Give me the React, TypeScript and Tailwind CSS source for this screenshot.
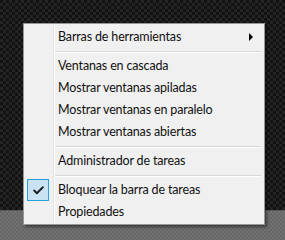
import { Check } from "lucide-react";

type Item = { label: string; sub?: boolean; checked?: boolean } | "sep";

const items: Item[] = [
  { label: "Barras de herramientas", sub: true },
  "sep",
  { label: "Ventanas en cascada" },
  { label: "Mostrar ventanas apiladas" },
  { label: "Mostrar ventanas en paralelo" },
  { label: "Mostrar ventanas abiertas" },
  "sep",
  { label: "Administrador de tareas" },
  "sep",
  { label: "Bloquear la barra de tareas", checked: true },
  { label: "Propiedades" },
];

export default function App() {
  return (
    <div className="relative w-[285px] h-[240px] overflow-hidden flex flex-col font-['Lato',sans-serif]">
      {/* desktop */}
      <div className="flex-1 bg-[#161616] bg-[repeating-conic-gradient(#242424_0_25%,#121212_0_50%)] bg-size-[6px_6px]" />
      {/* taskbar */}
      <div className="h-[30px] bg-[#6b6b6b] bg-[repeating-conic-gradient(#727272_0_25%,#666666_0_50%)] bg-size-[4px_4px] border-t border-[#5a5a5a]" />

      {/* context menu */}
      <div className="absolute left-[23px] top-[23px] w-[242px] h-[202px] bg-[#f0f0f0] border border-[#979797] shadow-[2px_2px_3px_rgba(0,0,0,0.45)] p-[2px]">
        <div className="relative flex flex-col">
          <div className="absolute left-[27px] top-0 bottom-0 w-px bg-[#e2e3e3] border-r border-white box-content" />
          {items.map((it, i) =>
            it === "sep" ? (
              <div key={i} className="h-[7px] flex items-center pl-[29px] pr-[1px]">
                <div className="h-px w-full bg-[#d7d7d7] border-b border-white box-content" />
              </div>
            ) : (
              <div key={i} className="relative h-[22px] flex items-center text-[12.5px] tracking-[-0.15px] text-[#111]">
                <div className="w-[29px] h-[22px] flex items-center">
                  {it.checked && (
                    <div className="w-[22px] h-[22px] ml-px border border-[#26a0da] bg-[#c9e3f5] flex items-center justify-center">
                      <Check className="w-[13px] h-[13px] text-[#1e1e1e]" strokeWidth={3.5} />
                    </div>
                  )}
                </div>
                <span className="pl-[3px] leading-none">{it.label}</span>
                {it.sub && (
                  <span className="ml-auto mr-[9px] w-0 h-0 border-y-[4px] border-y-transparent border-l-[4px] border-l-black" />
                )}
              </div>
            )
          )}
        </div>
      </div>
    </div>
  );
}
